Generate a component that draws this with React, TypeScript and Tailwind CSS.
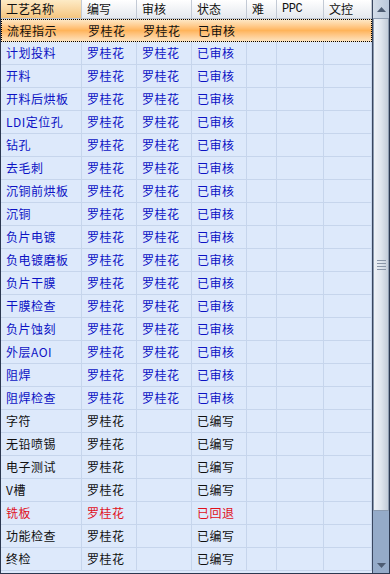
import React from 'react';

type Row = { name: string; writer: string; reviewer: string; status: string; tone: 'blue' | 'black' | 'red' };

const rows: Row[] = [
  { name: '流程指示', writer: '罗桂花', reviewer: '罗桂花', status: '已审核', tone: 'black' },
  { name: '计划投料', writer: '罗桂花', reviewer: '罗桂花', status: '已审核', tone: 'blue' },
  { name: '开料', writer: '罗桂花', reviewer: '罗桂花', status: '已审核', tone: 'blue' },
  { name: '开料后烘板', writer: '罗桂花', reviewer: '罗桂花', status: '已审核', tone: 'blue' },
  { name: 'LDI定位孔', writer: '罗桂花', reviewer: '罗桂花', status: '已审核', tone: 'blue' },
  { name: '钻孔', writer: '罗桂花', reviewer: '罗桂花', status: '已审核', tone: 'blue' },
  { name: '去毛刺', writer: '罗桂花', reviewer: '罗桂花', status: '已审核', tone: 'blue' },
  { name: '沉铜前烘板', writer: '罗桂花', reviewer: '罗桂花', status: '已审核', tone: 'blue' },
  { name: '沉铜', writer: '罗桂花', reviewer: '罗桂花', status: '已审核', tone: 'blue' },
  { name: '负片电镀', writer: '罗桂花', reviewer: '罗桂花', status: '已审核', tone: 'blue' },
  { name: '负电镀磨板', writer: '罗桂花', reviewer: '罗桂花', status: '已审核', tone: 'blue' },
  { name: '负片干膜', writer: '罗桂花', reviewer: '罗桂花', status: '已审核', tone: 'blue' },
  { name: '干膜检查', writer: '罗桂花', reviewer: '罗桂花', status: '已审核', tone: 'blue' },
  { name: '负片蚀刻', writer: '罗桂花', reviewer: '罗桂花', status: '已审核', tone: 'blue' },
  { name: '外层AOI', writer: '罗桂花', reviewer: '罗桂花', status: '已审核', tone: 'blue' },
  { name: '阻焊', writer: '罗桂花', reviewer: '罗桂花', status: '已审核', tone: 'blue' },
  { name: '阻焊检查', writer: '罗桂花', reviewer: '罗桂花', status: '已审核', tone: 'blue' },
  { name: '字符', writer: '罗桂花', reviewer: '', status: '已编写', tone: 'black' },
  { name: '无铅喷锡', writer: '罗桂花', reviewer: '', status: '已编写', tone: 'black' },
  { name: '电子测试', writer: '罗桂花', reviewer: '', status: '已编写', tone: 'black' },
  { name: 'V槽', writer: '罗桂花', reviewer: '', status: '已编写', tone: 'black' },
  { name: '铣板', writer: '罗桂花', reviewer: '', status: '已回退', tone: 'red' },
  { name: '功能检查', writer: '罗桂花', reviewer: '', status: '已编写', tone: 'black' },
  { name: '终检', writer: '罗桂花', reviewer: '', status: '已编写', tone: 'black' },
];

const widths = ['w-[81px]', 'w-[55px]', 'w-[55px]', 'w-[55px]', 'w-[30px]', 'w-[47px]', 'w-[48px]'];
const headers = ['工艺名称', '编写', '审核', '状态', '难', 'PPC', '文控'];

const toneClass = {
  blue: 'text-[#0c12c4]',
  black: 'text-[#101010]',
  red: 'text-[#e0101c]',
};

const ScrollBar = () => (
  <div className="flex w-[17px] shrink-0 flex-col border-l border-[#3a4760] bg-[#95abc9]">
    <div className="flex h-[18px] items-center justify-center bg-gradient-to-r from-[#d4dde9] to-[#bac8db]">
      <svg width="9" height="5" viewBox="0 0 9 5"><path d="M0 5 L4.5 0 L9 5 Z" fill="#4d5c73" /></svg>
    </div>
    <div className="flex h-[493px] items-center justify-center border border-[#8c9bb0] bg-gradient-to-r from-[#eef2f7] via-[#dfe5ee] to-[#c3ccd9]">
      <div className="flex flex-col gap-[2px]">
        <div className="h-px w-[9px] bg-[#8a96a8]" />
        <div className="h-px w-[9px] bg-[#8a96a8]" />
        <div className="h-px w-[9px] bg-[#8a96a8]" />
        <div className="h-px w-[9px] bg-[#8a96a8]" />
      </div>
    </div>
    <div className="flex-1" />
    <div className="flex h-[16px] items-center justify-center">
      <svg width="9" height="5" viewBox="0 0 9 5"><path d="M0 0 L4.5 5 L9 0 Z" fill="#4d5c73" /></svg>
    </div>
  </div>
);

export default function App() {
  return (
    <div
      className="flex h-[574px] w-[390px] overflow-hidden border-x border-b border-[#2c3850] bg-[#dde9fb] text-[12px] leading-none"
      style={{ fontFamily: '"Noto Sans CJK SC", "Liberation Sans", sans-serif' }}
    >
      <div className="flex w-[371px] shrink-0 flex-col">
        <div className="flex h-[19px] border-b border-[#b9c3d1] bg-gradient-to-b from-[#ffffff] to-[#e4e8ee]">
          {headers.map((h, i) => (
            <div
              key={h}
              className={`${widths[i]} flex shrink-0 items-center border-r border-[#c3cad5] pl-[5px] text-[#111] ${
                i === 0 ? 'bg-gradient-to-b from-[#fdebc6] to-[#f5c57f]' : ''
              }`}
            >
              {h === 'PPC' ? <span className="font-mono text-[12px] tracking-[-0.5px]">PPC</span> : h}
            </div>
          ))}
        </div>
        {rows.map((r, idx) => {
          const selected = idx === 0;
          const cells = [r.name, r.writer, r.reviewer, r.status, '', '', ''];
          return (
            <div
              key={r.name}
              className={`flex h-[23px] shrink-0 ${
                selected
                  ? 'border border-dotted border-black bg-gradient-to-b from-[#fde7c4] via-[#ffb45a] to-[#fde2bc]'
                  : 'border-b border-[#c6d5ec]'
              }`}
            >
              {cells.map((c, i) => (
                <div
                  key={i}
                  className={`${widths[i]} flex shrink-0 items-center pl-[5px] tracking-[0.5px] ${
                    selected ? 'text-[#101010]' : `border-r border-[#c6d5ec] ${toneClass[r.tone]}`
                  }`}
                >
                  {c}
                </div>
              ))}
            </div>
          );
        })}
      </div>
      <ScrollBar />
    </div>
  );
}
